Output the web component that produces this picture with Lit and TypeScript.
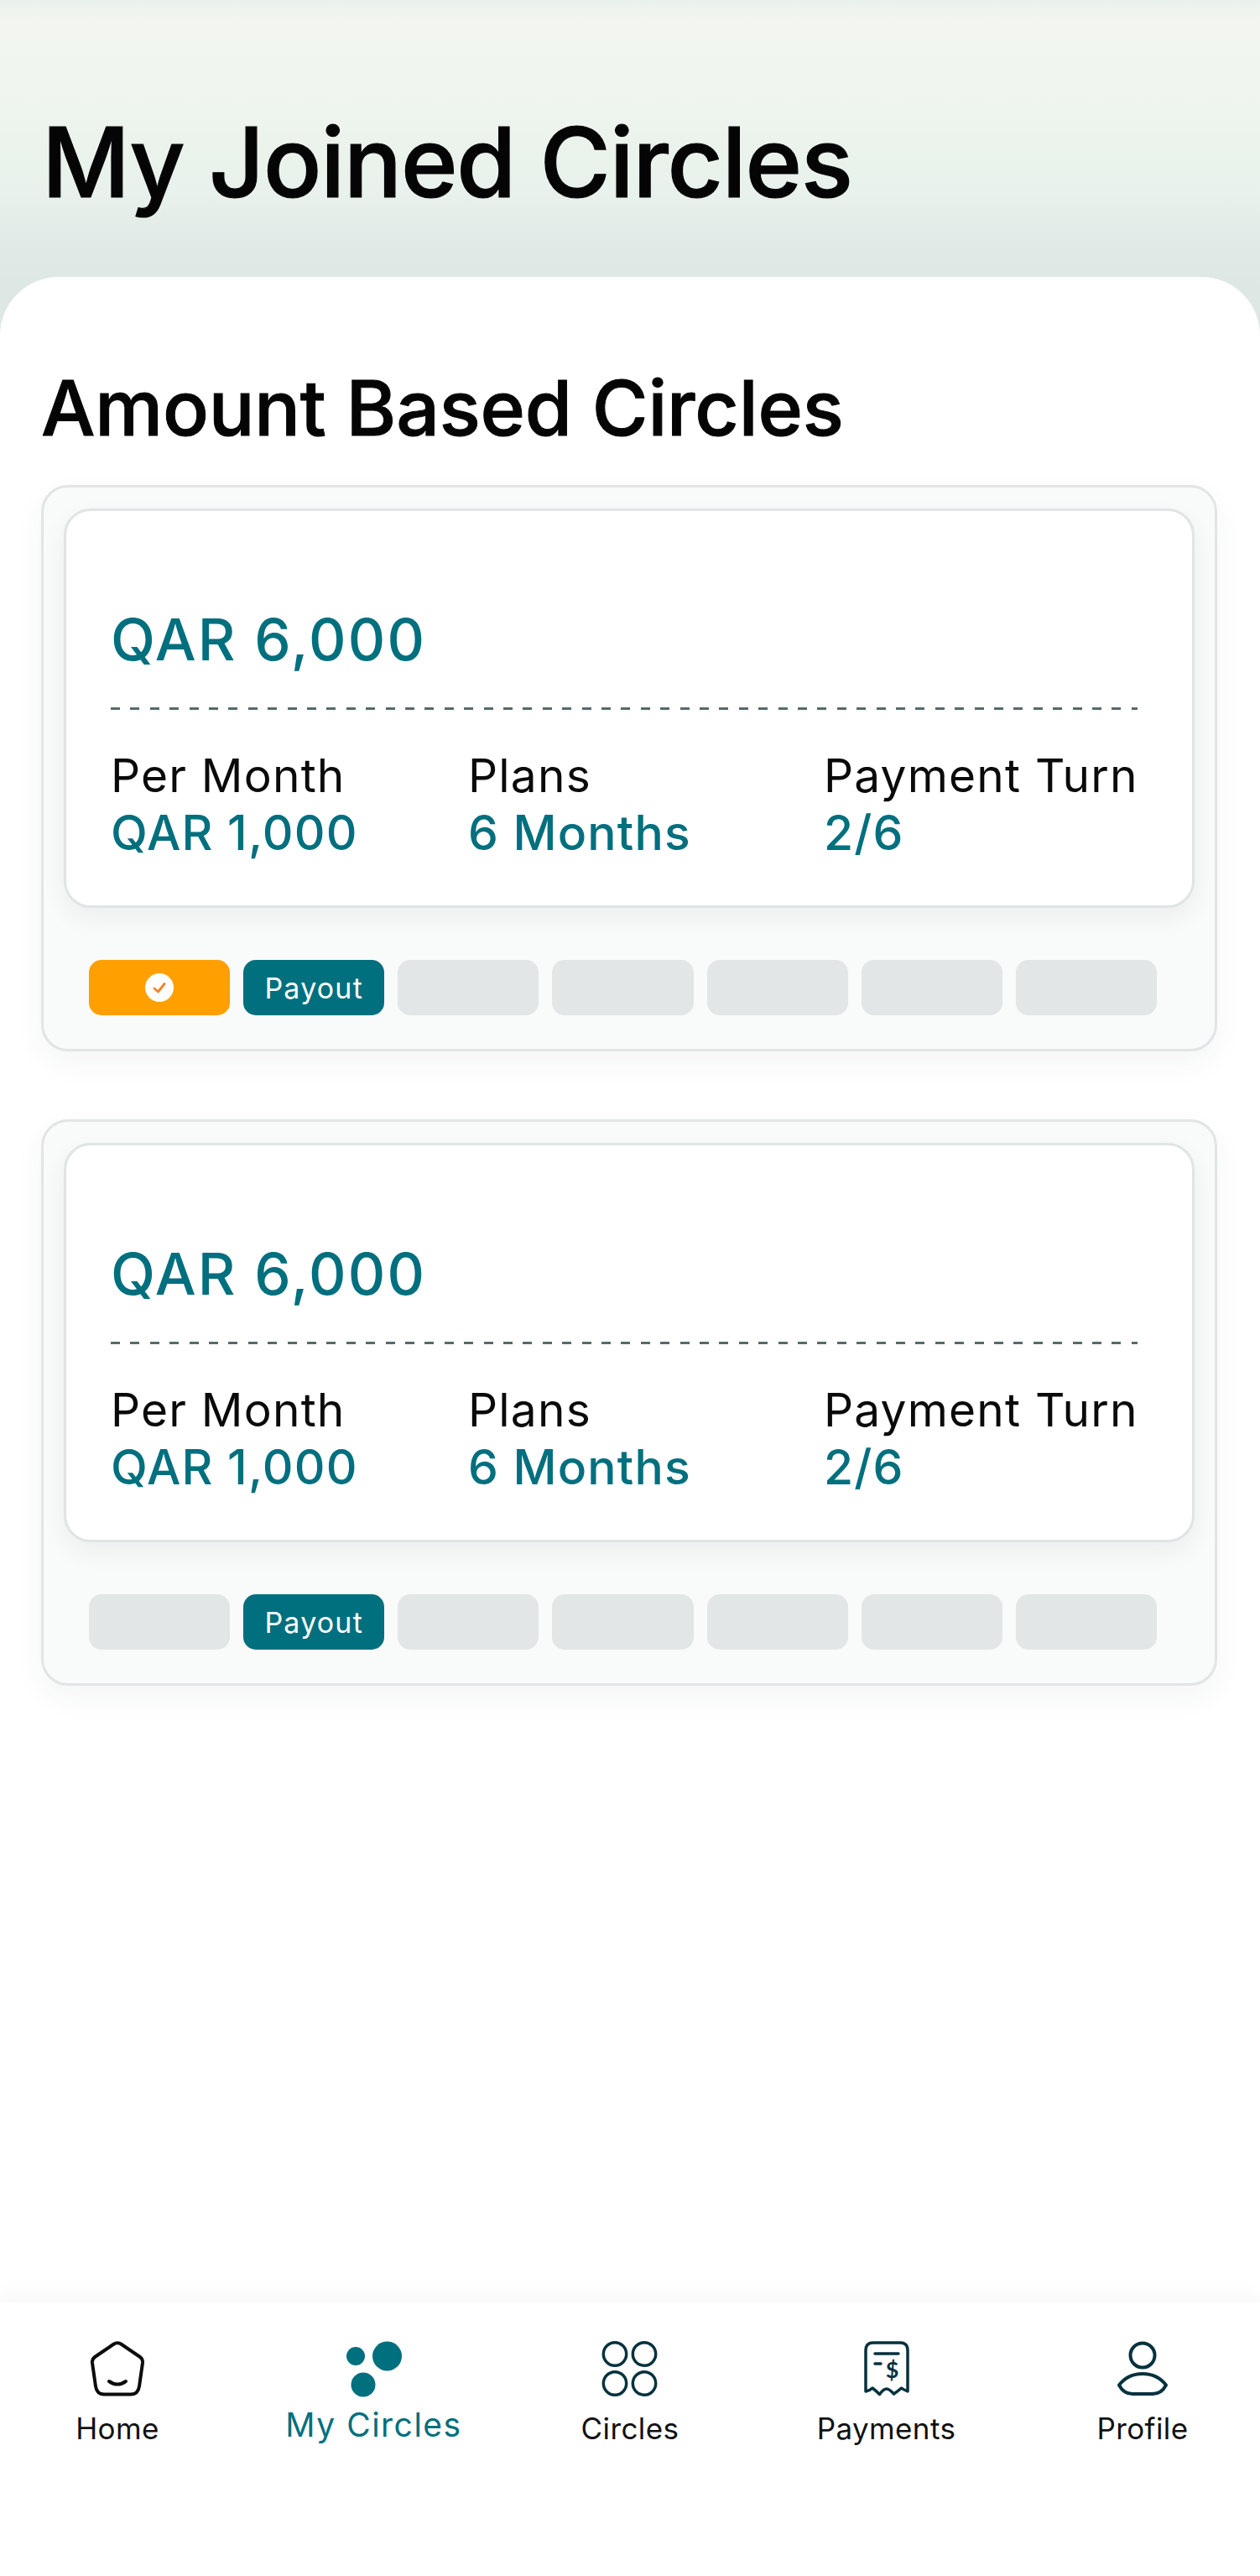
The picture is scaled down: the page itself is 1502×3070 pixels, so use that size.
import { LitElement, html, svg, css } from "lit";
import { customElement } from "lit/decorators.js";
import { classMap } from "lit/directives/class-map.js";

const icons = {
  home: svg`<svg class="icon" width="64" height="66" viewBox="0 0 64 66" fill="none" stroke="#0c0c0c" stroke-width="4" stroke-linecap="round" stroke-linejoin="round">
    <path d="M27 4Q32 .5 37 4L59 19Q62.500 21.500 62 26L58 54Q56.500 63.500 48 63.500H16Q7.500 63.500 6 54L2 26Q1.500 21.500 5 19Z" />
    <path d="M22 48Q32 55 42 48" />
  </svg>`,
  myCircles: svg`<svg class="icon" width="68" height="68" viewBox="0 0 68 68" fill="#006f7e">
    <circle cx="12" cy="18" r="11" />
    <circle cx="49.500" cy="18" r="17.500" />
    <circle cx="21" cy="52" r="14.500" />
  </svg>`,
  circles: svg`<svg class="icon" width="68" height="66" viewBox="0 0 68 66" fill="none" stroke="#06323e" stroke-width="3.500">
    <circle cx="16" cy="15.500" r="13.700" />
    <circle cx="51" cy="15.500" r="13.700" />
    <circle cx="16" cy="50.500" r="13.700" />
    <circle cx="51" cy="50.500" r="13.700" />
  </svg>`,
  payments: svg`<svg class="icon" width="54" height="66" viewBox="0 0 54 66" fill="none" stroke="#06323e" stroke-width="3.500" stroke-linecap="round" stroke-linejoin="round">
    <path d="M2 60V11Q2 2 11 2H43Q52 2 52 11V60Q47 58 44.500 56Q40 60 35.500 63Q30 57 27 57Q23 57 18.500 63.500Q14 59 10 56Q7 59 2 60Z" />
    <path d="M13 15H41" />
    <path d="M13 27H20" />
    <text x="33.500" y="44" text-anchor="middle" font-family="Lato, sans-serif" font-size="27" font-weight="700" fill="#06323e" stroke="none">$</text>
  </svg>`,
  profile: svg`<svg class="icon" width="64" height="66" viewBox="0 0 64 66" fill="none" stroke="#06323e" stroke-width="4">
    <circle cx="32" cy="17" r="14.500" />
    <path d="M32 39C46 39 55 46 60 52.500C56 60 50 63 44 63H20C14 63 8 60 4 52.500C9 46 18 39 32 39Z" stroke-linejoin="round" />
  </svg>`,
};

const navItems = [
  { label: "Home", icon: icons.home, active: false },
  { label: "My Circles", icon: icons.myCircles, active: true },
  { label: "Circles", icon: icons.circles, active: false },
  { label: "Payments", icon: icons.payments, active: false },
  { label: "Profile", icon: icons.profile, active: false },
];

const circleCards = [{ paid: true }, { paid: false }];

@customElement("app-root")
export class AppRoot extends LitElement {
  static styles = css`
    :host {
      display: block;
      width: 1502px;
      font-family: Inter, "Liberation Sans", sans-serif;
    }

    .page {
      display: flex;
      flex-direction: column;
      min-height: 3070px;
      background: linear-gradient(
        180deg,
        #e9f1ed 0,
        #f3f6f0 24px,
        #eef4ee 130px,
        #e8f1eb 230px,
        #dfe9e6 300px,
        #dde8e5 340px
      );
    }

    .header {
      box-sizing: border-box;
      height: 330px;
      padding: 136px 0 0 50px;
    }

    .title {
      margin: 0;
      font-size: 115px;
      line-height: 116px;
      font-weight: 500;
      letter-spacing: -1.2px;
      -webkit-text-stroke: 1.2px #050505;
      color: #050505;
    }

    .sheet {
      flex: 1;
      padding: 110px 51px 0 49px;
      background: #fff;
      border-radius: 70px 70px 0 0;
    }

    .sectionTitle {
      margin: 0 0 46px;
      font-size: 91px;
      line-height: 92px;
      font-weight: 500;
      letter-spacing: -0.2px;
      -webkit-text-stroke: 1px #050505;
      color: #050505;
    }

    .circleCard {
      padding: 25px 24px 40px;
      margin-bottom: 81px;
      background: #f9fafa;
      border: 3px solid #e1e5e5;
      border-radius: 32px;
      box-shadow: 0 14px 36px rgba(40, 60, 60, 0.05);
    }

    .summary {
      height: 476px;
      box-sizing: border-box;
      padding: 118px 53px 0;
      background: #fff;
      border: 3px solid #dfe4e4;
      border-radius: 32px;
      box-shadow: 0 12px 30px rgba(40, 60, 60, 0.06);
    }

    .amount {
      font-size: 69px;
      line-height: 70px;
      font-weight: 500;
      letter-spacing: 2.2px;
      color: #006f7e;
    }

    .dashes {
      height: 3px;
      margin: 46px 12px 0 0;
      background: repeating-linear-gradient(
        90deg,
        #566a6b 0 11px,
        transparent 11px 23.4px
      );
    }

    .stats {
      display: grid;
      grid-template-columns: 426px 424px auto;
      margin-top: 45px;
    }

    .stat__label {
      font-size: 55px;
      line-height: 66px;
      letter-spacing: 1.2px;
      color: #0a0a0a;
    }

    .stat__value {
      margin-top: 3px;
      font-size: 57px;
      line-height: 66px;
      font-weight: 500;
      letter-spacing: 1.2px;
      color: #006f7e;
    }

    .turns {
      display: grid;
      grid-template-columns: repeat(7, 1fr);
      gap: 16px;
      margin: 62px 45px 0 30px;
    }

    .turn {
      display: flex;
      align-items: center;
      justify-content: center;
      height: 66px;
      background: #e2e6e7;
      border-radius: 15px;
      font-size: 34px;
      letter-spacing: 1.2px;
      color: #fff;
    }

    .turn--paid {
      background: #ff9f00;
    }

    .turn--payout {
      background: #006f7e;
    }

    .nav {
      display: flex;
      justify-content: space-between;
      box-sizing: border-box;
      height: 326px;
      padding: 46px 40px 0;
      background: #fff;
      box-shadow: 0 -10px 22px rgba(0, 0, 0, 0.035);
    }

    .nav__item {
      display: flex;
      flex-direction: column;
      align-items: center;
      width: 200px;
    }

    .icon {
      display: block;
    }

    .nav__label {
      margin-top: 18px;
      font-size: 35px;
      line-height: 40px;
      letter-spacing: 0.4px;
      white-space: nowrap;
      color: #111;
    }

    .nav__item--active .nav__label {
      margin-top: 12px;
      font-size: 39px;
      letter-spacing: 1.5px;
      color: #006f7e;
    }
  `;

  private renderStat(label: string, value: string) {
    return html`
      <div>
        <div class="stat__label">${label}</div>
        <div class="stat__value">${value}</div>
      </div>
    `;
  }

  private renderCard(paid: boolean) {
    return html`
      <div class="circleCard">
        <div class="summary">
          <div class="amount">QAR 6,000</div>
          <div class="dashes"></div>
          <div class="stats">
            ${this.renderStat("Per Month", "QAR 1,000")}
            ${this.renderStat("Plans", "6 Months")}
            ${this.renderStat("Payment Turn", "2/6")}
          </div>
        </div>
        <div class="turns">
          <div class="turn ${paid ? "turn--paid" : ""}">
            ${paid
              ? html`<svg width="34" height="34" viewBox="0 0 34 34">
                  <circle cx="17" cy="17" r="17" fill="#fff" />
                  <path
                    d="M11 18l4.500 4L23 12.500"
                    fill="none"
                    stroke="#f0862a"
                    stroke-width="3"
                    stroke-linecap="round"
                    stroke-linejoin="round"
                  />
                </svg>`
              : ""}
          </div>
          <div class="turn turn--payout">Payout</div>
          <div class="turn"></div>
          <div class="turn"></div>
          <div class="turn"></div>
          <div class="turn"></div>
          <div class="turn"></div>
        </div>
      </div>
    `;
  }

  render() {
    return html`
      <div class="page">
        <div class="header">
          <h1 class="title">My Joined Circles</h1>
        </div>
        <div class="sheet">
          <h2 class="sectionTitle">Amount Based Circles</h2>
          ${circleCards.map((card) => this.renderCard(card.paid))}
        </div>
        <nav class="nav">
          ${navItems.map(
            (item) => html`
              <div class=${classMap({ nav__item: true, "nav__item--active": item.active })}>
                ${item.icon}
                <div class="nav__label">${item.label}</div>
              </div>
            `
          )}
        </nav>
      </div>
    `;
  }
}
